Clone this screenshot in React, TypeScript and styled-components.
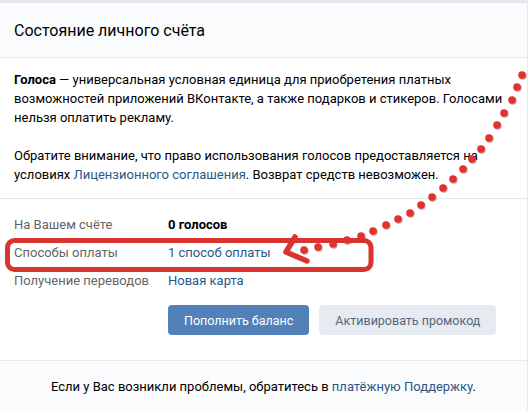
import styled, { createGlobalStyle } from 'styled-components';

const GlobalStyle = createGlobalStyle`
  html, body {
    margin: 0;
    padding: 0;
    background: #ffffff;
  }
  body {
    font-family: Roboto, "Open Sans", "Liberation Sans", sans-serif;
    font-size: 13px;
    color: #000;
    -webkit-font-smoothing: antialiased;
  }
`;

const Page = styled.div`
  position: relative;
  width: 530px;
  height: 411px;
  overflow: hidden;
`;

const Card = styled.div`
  width: 527px;
  border-top: 3px solid #e4e6ea;
  border-right: 1px solid #e7e8ec;
  background: #fff;
`;

const Header = styled.div`
  height: 54px;
  display: flex;
  align-items: center;
  padding: 0 14px;
  background: #fafbfc;
  border-bottom: 1px solid #e7e8ec;
  font-size: 16px;
  color: #000;
`;

const Info = styled.div`
  padding: 12px 14px 14px;
  line-height: 19px;
  border-bottom: 1px solid #e7e8ec;
`;

const Paragraph = styled.p`
  margin: 0 0 19px;
  &:last-child {
    margin-bottom: 0;
  }
`;

const Link = styled.a`
  color: #2a5885;
  text-decoration: none;
`;

const Details = styled.div`
  padding: 12px 14px 25px;
`;

const Row = styled.div`
  display: flex;
  line-height: 28px;
`;

const Label = styled.div`
  width: 154px;
  color: #656565;
`;

const Value = styled.div<{ $bold?: boolean }>`
  font-weight: ${(p) => (p.$bold ? 700 : 400)};
`;

const Buttons = styled.div`
  display: flex;
  gap: 10px;
  margin: 10px 0 0 154px;
`;

const Button = styled.button<{ $primary?: boolean }>`
  height: 30px;
  padding: 0 16px;
  border: none;
  border-radius: 4px;
  font-family: inherit;
  font-size: 12.5px;
  background: ${(p) => (p.$primary ? '#5181b8' : '#e5ebf1')};
  color: ${(p) => (p.$primary ? '#fff' : '#55677d')};
`;

const Footer = styled.div`
  border-top: 1px solid #e7e8ec;
  background: #fafbfc;
  height: 50px;
  display: flex;
  align-items: center;
  justify-content: center;
  color: #000;
`;

const Annotation = styled.svg`
  position: absolute;
  top: 0;
  left: 0;
  pointer-events: none;
`;

const dots: [number, number][] = [
  [522, 75], [517, 87], [512, 100], [504, 113], [497, 125], [489, 138],
  [481, 149], [472, 159], [463, 169], [453, 179], [443, 188], [432, 197],
  [421, 205], [410, 213], [398, 219], [386, 225], [373, 231], [361, 236],
  [347, 240], [333, 244], [318, 247], [304, 250],
];

const App = () => {
  return (
    <Page>
      <GlobalStyle />
      <Card>
        <Header>Состояние личного счёта</Header>
        <Info>
          <Paragraph>
            <b>Голоса</b> — универсальная условная единица для приобретения платных
            возможностей приложений ВКонтакте, а также подарков и стикеров. Голосами
            нельзя оплатить рекламу.
          </Paragraph>
          <Paragraph>
            Обратите внимание, что право использования голосов предоставляется на
            условиях <Link href="#">Лицензионного соглашения</Link>. Возврат средств невозможен.
          </Paragraph>
        </Info>
        <Details>
          <Row>
            <Label>На Вашем счёте</Label>
            <Value $bold>0 голосов</Value>
          </Row>
          <Row>
            <Label>Способы оплаты</Label>
            <Value><Link href="#">1 способ оплаты</Link></Value>
          </Row>
          <Row>
            <Label>Получение переводов</Label>
            <Value><Link href="#">Новая карта</Link></Value>
          </Row>
          <Buttons>
            <Button $primary>Пополнить баланс</Button>
            <Button>Активировать промокод</Button>
          </Buttons>
        </Details>
        <Footer>
          <span>
            Если у Вас возникли проблемы, обратитесь в <Link href="#">платёжную Поддержку</Link>.
          </span>
        </Footer>
      </Card>
      <Annotation width="530" height="411" viewBox="0 0 530 411">
        <rect x="7.5" y="240.5" width="363.5" height="29" rx="7" fill="none" stroke="#d9342f" strokeWidth="5" />
        {dots.map(([x, y], i) => (
          <g key={i}>
            <circle cx={x + 0.8} cy={y + 0.8} r="3.9" fill="#a8231f" opacity="0.45" />
            <circle cx={x} cy={y} r="3.8" fill="#e0332e" />
          </g>
        ))}
        <path d="M295 237 L286 252 L307 261" fill="none" stroke="#d9342f" strokeWidth="5.5" strokeLinecap="round" strokeLinejoin="round" />
      </Annotation>
    </Page>
  );
};

export default App;
